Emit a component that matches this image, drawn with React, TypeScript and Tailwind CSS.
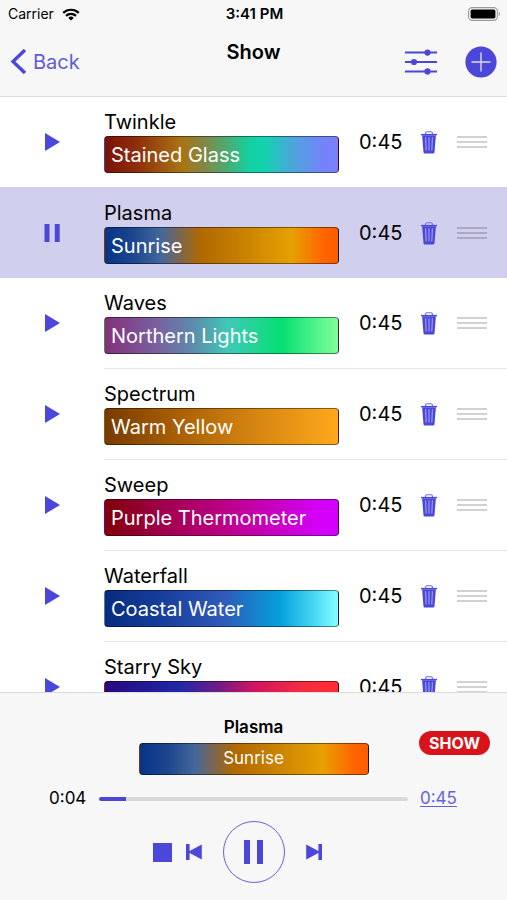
import { useState } from "react";

type Item = { id: number; effect: string; palette: string; gradient: string };

const SUNRISE =
  "bg-[linear-gradient(90deg,#083488_0%,#1c468e_12%,#44679c_24%,#74665c_31%,#b06800_41%,#c47c00_56%,#e6a000_80%,#ff6400_94%,#ff5c00_100%)]";

const ITEMS: Item[] = [
  {
    id: 1,
    effect: "Twinkle",
    palette: "Stained Glass",
    gradient:
      "bg-[linear-gradient(90deg,#7c1208_0%,#8e2c0c_13%,#a87414_33%,#808848_43%,#14d0a0_62%,#10d4ac_68%,#4ea4dc_81%,#7880fc_95%,#7880fc_100%)]",
  },
  { id: 2, effect: "Plasma", palette: "Sunrise", gradient: SUNRISE },
  {
    id: 3,
    effect: "Waves",
    palette: "Northern Lights",
    gradient:
      "bg-[linear-gradient(90deg,#84307c_0%,#7a60a0_22%,#5c8cac_38%,#40c8b8_53%,#04e070_76%,#44f088_88%,#80fc98_100%)]",
  },
  {
    id: 4,
    effect: "Spectrum",
    palette: "Warm Yellow",
    gradient: "bg-[linear-gradient(90deg,#783c00_0%,#a45c04_28%,#d08010_60%,#ffa81c_100%)]",
  },
  {
    id: 5,
    effect: "Sweep",
    palette: "Purple Thermometer",
    gradient: "bg-[linear-gradient(90deg,#800008_0%,#a0004c_25%,#bc0088_52%,#d400f8_92%,#d400ff_100%)]",
  },
  {
    id: 6,
    effect: "Waterfall",
    palette: "Coastal Water",
    gradient:
      "bg-[linear-gradient(90deg,#082c80_0%,#143c98_22%,#3058b8_50%,#04a0dc_75%,#40d0f0_88%,#80fcff_99%)]",
  },
  {
    id: 7,
    effect: "Starry Sky",
    palette: "Andromeda",
    gradient: "bg-[linear-gradient(90deg,#280880_0%,#2028a8_32%,#6c1c88_48%,#d01460_64%,#f42c40_85%,#ff2c34_100%)]",
  },
];

function WifiIcon() {
  return (
    <svg width="18" height="13" viewBox="0 0 18 13" fill="none" stroke="#000" strokeWidth="2.2" aria-hidden="true">
      <path d="M1.2 4.9a11.2 11.2 0 0 1 15.6 0" />
      <path d="M4 7.9a7.2 7.2 0 0 1 10 0" />
      <path d="M9 12.6 6.3 9.9a3.9 3.9 0 0 1 5.4 0z" fill="#000" stroke="none" />
    </svg>
  );
}

function BatteryIcon() {
  return (
    <svg width="33" height="14" viewBox="0 0 33 14" aria-hidden="true">
      <rect x="0.6" y="0.6" width="28.8" height="12.8" rx="3.6" fill="none" stroke="#9a9a9a" strokeWidth="1.1" />
      <rect x="2.6" y="2.6" width="24.8" height="8.8" rx="1.6" fill="#000" />
      <path d="M30.8 4.8c1.5.6 1.5 3.8 0 4.4z" fill="#9a9a9a" />
    </svg>
  );
}

function PlayIcon() {
  return (
    <svg width="15" height="18" viewBox="0 0 15 18" fill="currentColor" aria-hidden="true">
      <path d="M0 0 15 9 0 18z" />
    </svg>
  );
}

function PauseIcon() {
  return (
    <svg width="16" height="18" viewBox="0 0 16 18" fill="currentColor" aria-hidden="true">
      <path d="M0.5 0h5v18h-5zM10.8 0h4.9v18h-4.9z" />
    </svg>
  );
}

function TrashIcon() {
  return (
    <svg width="16" height="23" viewBox="0 0 16 23" aria-hidden="true">
      <path d="M4.6 3.2V2Q4.6.7 6 .7h4q1.4 0 1.4 1.3v1.2" fill="none" stroke="#6f6ce2" strokeWidth="1.1" />
      <path d="M0 2.9h16v1.4H0z" fill="#4b47db" />
      <path d="M1.1 4.2h13.8l-1.4 17q-.1 1.3-1.4 1.3H3.9q-1.3 0-1.4-1.3z" fill="#4b47db" />
      <path d="m4.6 6.2.6 13.4M8 6.2v13.4M11.4 6.2l-.6 13.4" stroke="#a5a3f0" strokeWidth="1.1" fill="none" />
    </svg>
  );
}

function SkipIcon({ back }: { back?: boolean }) {
  return (
    <svg width="16" height="16" viewBox="0 0 16 16" fill="currentColor" aria-hidden="true">
      {back ? <path d="M0 0h3.6v6.9L15.8.5v15L3.6 9.1V16H0z" /> : <path d="M16 0h-3.6v6.9L.2.5v15l12.2-6.4V16H16z" />}
    </svg>
  );
}

function Swatch({ gradient, className, children }: { gradient: string; className: string; children: string }) {
  return (
    <div className={`flex items-center rounded border border-black/45 text-white ${gradient} ${className}`}>
      {children}
    </div>
  );
}

function Row({
  item,
  active,
  separated,
  onToggle,
}: {
  item: Item;
  active: boolean;
  separated: boolean;
  onToggle: () => void;
}) {
  const line = active ? "border-t border-transparent" : separated ? "border-t border-[#e6e6e8]" : "";
  return (
    <li className={`flex shrink-0 ${active ? "bg-[#d1cfee]" : "bg-white"}`}>
      <button
        type="button"
        aria-label={`${active ? "Pause" : "Play"} ${item.effect}`}
        onClick={onToggle}
        className="flex w-26 shrink-0 items-center justify-center text-[#4b47db]"
      >
        {active ? <PauseIcon /> : <PlayIcon />}
      </button>
      <div className={`flex min-w-0 flex-1 items-center pr-5 ${line}`}>
        <div className="min-w-0 flex-1 pt-[11px] pb-3.5">
          <div className="h-7 truncate leading-7">{item.effect}</div>
          <Swatch gradient={item.gradient} className="h-[37px] px-1.5">
            {item.palette}
          </Swatch>
        </div>
        <span className="ml-5 w-11">0:45</span>
        <button type="button" aria-label={`Delete ${item.effect}`} className="ml-[18px]">
          <TrashIcon />
        </button>
        <button type="button" aria-label={`Reorder ${item.effect}`} className="ml-5 flex w-[30px] flex-col gap-[3px]">
          <span className="h-0.5 bg-black/18" />
          <span className="h-0.5 bg-black/18" />
          <span className="h-0.5 bg-black/18" />
        </button>
      </div>
    </li>
  );
}

export default function App() {
  const [current, setCurrent] = useState(2);
  const [elapsed, setElapsed] = useState(4);
  const index = ITEMS.findIndex((i) => i.id === current);
  const playing = ITEMS[index];
  const percent = (elapsed / 45) * 100;

  return (
    <div className="flex h-screen flex-col overflow-hidden bg-white font-['Inter','Liberation_Sans',sans-serif] text-xl text-black">
      <header className="shrink-0 border-b border-[#dcdcdc] bg-[#f7f7f7]">
        <div className="grid h-7 grid-cols-[1fr_auto_1fr] items-center pr-1.5 pl-2 text-sm">
          <div className="flex items-center gap-2">
            <span>Carrier</span>
            <WifiIcon />
          </div>
          <span className="text-[15px] font-semibold">3:41 PM</span>
          <div className="flex justify-end">
            <BatteryIcon />
          </div>
        </div>
        <div className="grid h-17 grid-cols-[1fr_auto_1fr] items-center pr-2.5 pl-2.5">
          <a href="#back" className="flex items-center gap-1.5 text-[#5f5bdc]">
            <svg width="17" height="26" viewBox="0 0 17 26" fill="none" stroke="#4b47db" strokeWidth="3.4" aria-hidden="true">
              <path d="M15 1 3 12.5 15 24" />
            </svg>
            Back
          </a>
          <h1 className="self-start pt-2.5 leading-7 font-semibold">Show</h1>
          <div className="flex items-center justify-end gap-7">
            <button type="button" aria-label="Settings">
              <svg width="32" height="26" viewBox="0 0 32 26" fill="#4b47db" stroke="#4b47db" strokeWidth="2" aria-hidden="true">
                <path d="M0 3.6h32M0 13h32M0 22.4h32" />
                <circle cx="22.5" cy="3.6" r="2.1" />
                <circle cx="9" cy="13" r="2.1" />
                <circle cx="22.5" cy="22.4" r="2.1" />
              </svg>
            </button>
            <button type="button" aria-label="Add">
              <svg width="32" height="32" viewBox="0 0 32 32" aria-hidden="true">
                <circle cx="16" cy="16" r="15.6" fill="#4b47db" />
                <path d="M6.5 16h19M16 6.5v19" stroke="#dedcff" strokeWidth="1.4" />
              </svg>
            </button>
          </div>
        </div>
      </header>

      <ul className="flex min-h-0 flex-1 flex-col overflow-hidden">
        {ITEMS.map((item, i) => (
          <Row
            key={item.id}
            item={item}
            active={item.id === current}
            separated={i > 0 && i - 1 !== index}
            onToggle={() => setCurrent(item.id)}
          />
        ))}
      </ul>

      <footer className="shrink-0 border-t border-[#dcdcdc] bg-[#f7f7f7] pt-[22px] pb-[17px] text-[17px]">
        <div className="grid grid-cols-[1fr_230px_1fr] items-start">
          <div className="col-start-2">
            <div className="pb-1 text-center leading-6 font-semibold">{playing.effect}</div>
            <Swatch gradient={playing.gradient} className="h-8 justify-center">
              {playing.palette}
            </Swatch>
          </div>
          <div className="flex justify-end pt-4 pr-[17px]">
            <button type="button" className="h-6 rounded-full bg-[#d8141a] px-2.5 text-base leading-6 font-bold text-white">
              SHOW
            </button>
          </div>
        </div>
        <div className="mt-3 flex h-6 items-center gap-3 px-[49px]">
          <label htmlFor="position" className="w-[38px]">
            0:{String(elapsed).padStart(2, "0")}
          </label>
          <input
            id="position"
            type="range"
            min={0}
            max={45}
            value={elapsed}
            onChange={(e) => setElapsed(Number(e.target.value))}
            style={{ backgroundImage: `linear-gradient(to right, #4b47db ${percent}%, #d9d9d9 ${percent}%)` }}
            className="h-1 min-w-0 flex-1 appearance-none rounded-full [&::-webkit-slider-thumb]:size-0 [&::-webkit-slider-thumb]:appearance-none"
          />
          <button type="button" className="w-[38px] text-left text-[#6662dc] underline underline-offset-2">
            0:45
          </button>
        </div>
        <div className="mt-2.5 grid grid-cols-[1fr_auto_1fr] items-center text-[#4b47db]">
          <div className="flex items-center justify-end gap-3.5 pr-[21px]">
            <button type="button" aria-label="Stop" className="size-[19px] bg-[#4b47db]" />
            <button type="button" aria-label="Previous">
              <SkipIcon back />
            </button>
          </div>
          <button
            type="button"
            aria-label="Pause"
            className="flex size-[62px] items-center justify-center rounded-full border border-[#6662dc]"
          >
            <svg width="19" height="24" viewBox="0 0 19 24" fill="currentColor" aria-hidden="true">
              <path d="M0 0h6v24H0zM13 0h6v24h-6z" />
            </svg>
          </button>
          <div className="flex items-center pl-[21px]">
            <button type="button" aria-label="Next">
              <SkipIcon />
            </button>
          </div>
        </div>
      </footer>
    </div>
  );
}
